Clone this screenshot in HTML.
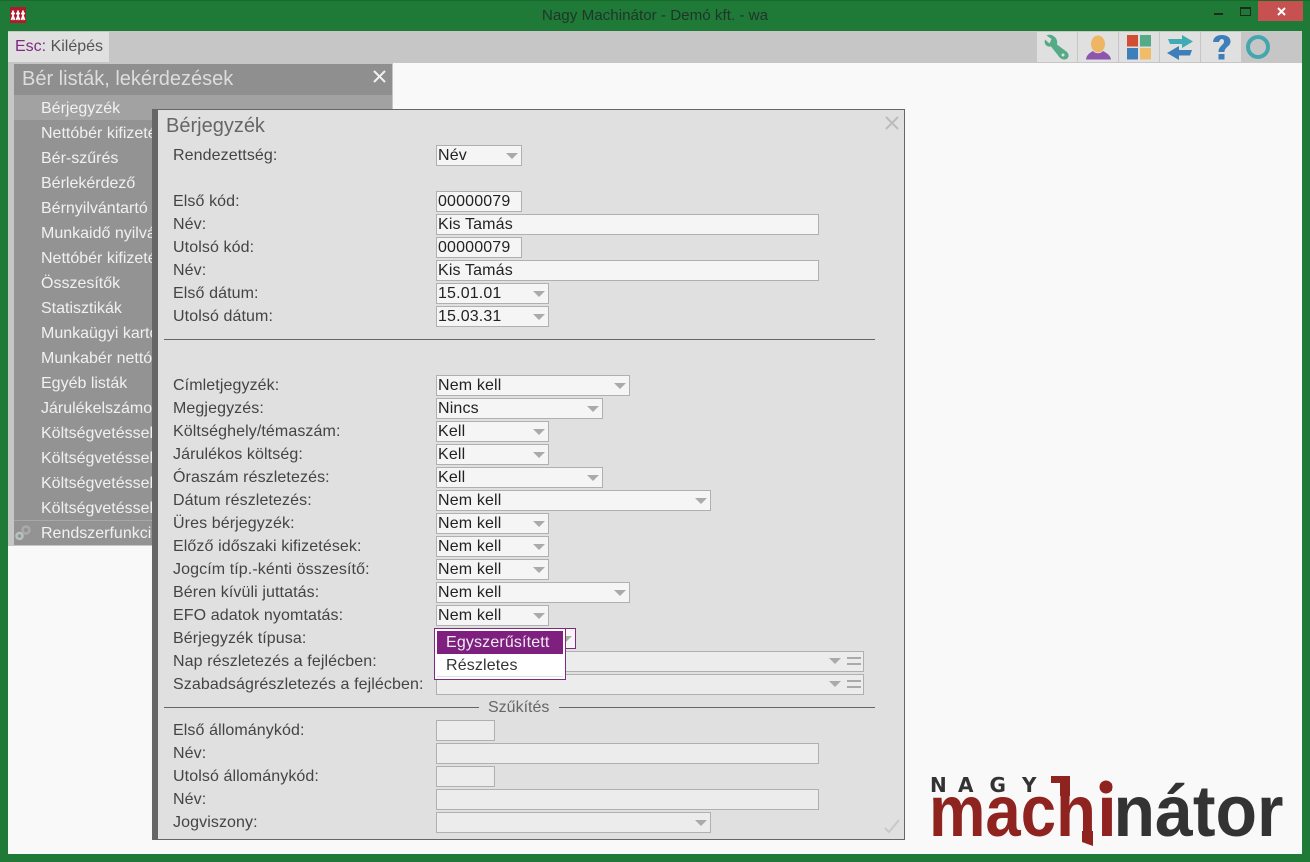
<!DOCTYPE html>
<html lang="hu"><head><meta charset="utf-8"><title>Nagy Machinátor</title>
<style>
html,body{margin:0;padding:0;width:1310px;height:862px;overflow:hidden;background:#1e7a36;font-family:"Liberation Sans",sans-serif;font-size:16px}
div,span{position:absolute;box-sizing:border-box;white-space:nowrap}
.c{left:8px;top:31px;width:1294px;height:823px;background:#f9f9f9}
.it{left:41px;color:#f1f1f1;line-height:27px;height:25px}
.l{left:173px;color:#444;line-height:24px;height:22px;letter-spacing:.1px}
.f{left:436px;height:21px;background:#f5f5f5;border:1px solid #b0b0b0;color:#222;line-height:19px;padding-left:1px;letter-spacing:.15px}
.f.s:after{content:"";position:absolute;right:3px;top:7px;border-style:solid;border-width:6px 6px 0;border-color:#aaa transparent transparent}
.e{background:#ececec}
.q{position:absolute;right:2px;top:5px;width:14px;height:8px;border-top:2px solid #aaa;border-bottom:2px solid #aaa}
.t{top:32px;width:40px;height:30px;background:#e0e0e0}
</style></head><body>
<div style="left:0;top:0;width:1310px;height:1px;background:#166a2b"></div>
<svg style="position:absolute;left:10px;top:7px" width="17" height="17" viewBox="0 0 17 17"><rect width="16" height="16" fill="#b01c2e"/><path d="M3 3.500v8M1 6.500h4M1.500 13L3 9l1.500 4M8 3.500v8M6 6.500h4M6.500 13L8 9l1.500 4M13 3.500v8M11 6.500h4M11.500 13L13 9l1.500 4" stroke="#fff" stroke-width="1.800" fill="none"/></svg>
<div style="left:0;width:1310px;top:7px;text-align:center;color:#20362a;font-size:15.200px;line-height:18px">Nagy Machinátor - Demó kft. - wa</div>
<div style="left:1214px;top:13px;width:9px;height:2px;background:#1c2b20"></div>
<div style="left:1240px;top:7px;width:11px;height:9px;border:1px solid #1c2b20;border-top-width:2px"></div>
<div style="left:1258px;top:1px;width:45px;height:20px;background:#c75050"></div>
<svg style="position:absolute;left:1277px;top:7px" width="9" height="9" viewBox="0 0 9 9"><path d="M1 1l7 7M8 1L1 8" stroke="#fff" stroke-width="2"/></svg>

<div class="c"></div>
<div style="left:8px;top:31px;width:1294px;height:32px;background:#c6c6c6"></div>
<div style="left:8px;top:32px;width:101px;height:30px;background:#e0e0e0;line-height:30px;padding-left:7px;color:#555"><span style="position:static;color:#7f2a80">Esc:</span> Kilépés</div>

<div class="t" style="left:1037px"></div><div class="t" style="left:1078px"></div><div class="t" style="left:1119px"></div><div class="t" style="left:1160px"></div><div class="t" style="left:1201px"></div>
<svg style="position:absolute;left:1037px;top:31px" width="240" height="32" viewBox="0 0 240 32">
<path d="M8 8.500c-1.500 4 1.500 8 6 7l7.500 9.500c1.500 2.500 5 4.500 8 3s2.500-5 .5-7L20 13.500c1-4.500-1.500-8-5.500-9.500-2-.5-4 0-5 .5l5 3.500-2 4.500z" fill="#56ab87"/><circle cx="26" cy="24" r="1.500" fill="#e0e0e0"/>
<ellipse cx="61" cy="13" rx="7" ry="8.500" fill="#eeb565"/><path d="M49 28.500c.5-4 2.500-6 7-8.500 2.500 3 7.500 3 10 0 4.500 2.500 7.500 4.500 8 8.500z" fill="#8d55ab"/>
<rect x="90" y="4" width="11" height="11.500" fill="#d14e32"/><rect x="103" y="4" width="11" height="11.500" fill="#56ab87"/><rect x="90" y="17" width="11" height="11.500" fill="#3d7fb8"/><rect x="103" y="17" width="11" height="11.500" fill="#efbc69"/>
<path d="M131 8h14V4l11 6.500L145 17v-4h-12z" fill="#3fabb5"/><path d="M130 22l12-7v4h13l-2 5.500h-11V29z" fill="#3d7fb8"/>
<path d="M176 11c.5-5 4-7 9-7 5 0 8.500 2.500 8.500 6.500 0 5-6 5.500-6 10.500h-6c0-6 5.500-7 5.500-10.500 0-1.500-1-2.500-2-2.500-1.500 0-2.500 1-3 3z" fill="#3d7fb8"/><rect x="181.500" y="23" width="6" height="5.500" fill="#3d7fb8"/>
<circle cx="221" cy="16" r="10" fill="none" stroke="#46a6ad" stroke-width="4"/></svg>

<!-- sidebar -->
<div style="left:8px;top:63px;width:385px;height:483px;background:#c6c6c6"></div>
<div style="left:14px;top:64px;width:378px;height:481px;background:#939393"></div>
<div style="left:14px;top:64px;width:378px;height:31px;background:#8f8f8f;color:#ddd;font-size:20px;line-height:31px;padding-left:8px">Bér listák, lekérdezések</div>
<svg style="position:absolute;left:373px;top:70px" width="13" height="13" viewBox="0 0 13 13"><path d="M1 1l11 11M12 1L1 12" stroke="#f2f2f2" stroke-width="2"/></svg>
<div style="left:14px;top:95px;width:378px;height:25px;background:#a2a2a2"></div>
<div style="left:14px;top:520px;width:378px;height:1px;background:#a8a8a8"></div>
<div class="it" style="top:95px">Bérjegyzék</div>
<div class="it" style="top:120px">Nettóbér kifizetés</div>
<div class="it" style="top:145px">Bér-szűrés</div>
<div class="it" style="top:170px">Bérlekérdező</div>
<div class="it" style="top:195px">Bérnyilvántartó</div>
<div class="it" style="top:220px">Munkaidő nyilvántartás</div>
<div class="it" style="top:245px">Nettóbér kifizetés</div>
<div class="it" style="top:270px">Összesítők</div>
<div class="it" style="top:295px">Statisztikák</div>
<div class="it" style="top:320px">Munkaügyi kartonok</div>
<div class="it" style="top:345px">Munkabér nettó</div>
<div class="it" style="top:370px">Egyéb listák</div>
<div class="it" style="top:395px">Járulékelszámolás</div>
<div class="it" style="top:420px">Költségvetéssel</div>
<div class="it" style="top:445px">Költségvetéssel</div>
<div class="it" style="top:470px">Költségvetéssel</div>
<div class="it" style="top:495px">Költségvetéssel</div>
<div class="it" style="top:520px">Rendszerfunkciók</div>
<svg style="position:absolute;left:15px;top:524px" width="17" height="17" viewBox="0 0 17 17"><circle cx="11" cy="6" r="3.500" fill="none" stroke="#aaa" stroke-width="2.500"/><circle cx="4.500" cy="12" r="3" fill="none" stroke="#b9c0c0" stroke-width="2.500"/></svg>

<!-- dialog -->
<div style="left:152px;top:109px;width:753px;height:731px;background:#e0e0e0;border:1px solid #666;border-left:6px solid #666"></div>
<div style="left:166px;top:114px;font-size:20px;line-height:24px;color:#666">Bérjegyzék</div>
<svg style="position:absolute;left:885px;top:116px" width="14" height="14" viewBox="0 0 14 14"><path d="M1 1l12 12M13 1L1 13" stroke="#bbb" stroke-width="2"/></svg>

<div class="l" style="top:144px">Rendezettség:</div><div class="f s" style="top:145px;width:86px">Név</div>
<div class="l" style="top:190px">Első kód:</div><div class="f" style="top:191px;width:86px">00000079</div>
<div class="l" style="top:213px">Név:</div><div class="f" style="top:214px;width:383px">Kis Tamás</div>
<div class="l" style="top:236px">Utolsó kód:</div><div class="f" style="top:237px;width:86px">00000079</div>
<div class="l" style="top:259px">Név:</div><div class="f" style="top:260px;width:383px">Kis Tamás</div>
<div class="l" style="top:282px">Első dátum:</div><div class="f s" style="top:283px;width:113px">15.01.01</div>
<div class="l" style="top:305px">Utolsó dátum:</div><div class="f s" style="top:306px;width:113px">15.03.31</div>
<div style="left:164px;top:339px;width:711px;height:1px;background:#666"></div>

<div class="l" style="top:374px">Címletjegyzék:</div><div class="f s" style="top:375px;width:194px">Nem kell</div>
<div class="l" style="top:397px">Megjegyzés:</div><div class="f s" style="top:398px;width:167px">Nincs</div>
<div class="l" style="top:420px">Költséghely/témaszám:</div><div class="f s" style="top:421px;width:113px">Kell</div>
<div class="l" style="top:443px">Járulékos költség:</div><div class="f s" style="top:444px;width:113px">Kell</div>
<div class="l" style="top:466px">Óraszám részletezés:</div><div class="f s" style="top:467px;width:167px">Kell</div>
<div class="l" style="top:489px">Dátum részletezés:</div><div class="f s" style="top:490px;width:275px">Nem kell</div>
<div class="l" style="top:512px">Üres bérjegyzék:</div><div class="f s" style="top:513px;width:113px">Nem kell</div>
<div class="l" style="top:535px">Előző időszaki kifizetések:</div><div class="f s" style="top:536px;width:113px">Nem kell</div>
<div class="l" style="top:558px">Jogcím típ.-kénti összesítő:</div><div class="f s" style="top:559px;width:113px">Nem kell</div>
<div class="l" style="top:581px">Béren kívüli juttatás:</div><div class="f s" style="top:582px;width:194px">Nem kell</div>
<div class="l" style="top:604px">EFO adatok nyomtatás:</div><div class="f s" style="top:605px;width:113px">Nem kell</div>
<div class="l" style="top:627px">Bérjegyzék típusa:</div><div class="f s" style="top:628px;width:140px;border-color:#7f2a80"></div>
<div class="l" style="top:650px">Nap részletezés a fejlécben:</div>
<div class="f e" style="top:651px;width:428px"><span class="q"></span><span style="right:22px;top:6px;border-style:solid;border-width:6px 6px 0;border-color:#aaa transparent transparent"></span></div>
<div class="l" style="top:673px">Szabadságrészletezés a fejlécben:</div>
<div class="f e" style="top:674px;width:428px"><span class="q"></span><span style="right:22px;top:6px;border-style:solid;border-width:6px 6px 0;border-color:#aaa transparent transparent"></span></div>

<div style="left:434px;top:628px;width:132px;height:52px;background:#fff;border:1px solid #7f2a80"></div>
<div style="left:437px;top:631px;width:126px;height:23px;background:#7f2080;color:#eee;line-height:23px;padding-left:9px;letter-spacing:.15px">Egyszerűsített</div>
<div style="left:437px;top:654px;width:126px;height:23px;color:#333;line-height:23px;padding-left:9px;letter-spacing:.15px">Részletes</div>
<div style="left:437px;top:676px;width:126px;height:1px;background:#ddd"></div>

<div style="left:164px;top:707px;width:315px;height:1px;background:#666"></div>
<div style="left:559px;top:707px;width:316px;height:1px;background:#666"></div>
<div style="left:488px;top:697px;color:#666;line-height:22px">Szűkítés</div>

<div class="l" style="top:719px">Első állománykód:</div><div class="f e" style="top:720px;width:59px"></div>
<div class="l" style="top:742px">Név:</div><div class="f e" style="top:743px;width:383px"></div>
<div class="l" style="top:765px">Utolsó állománykód:</div><div class="f e" style="top:766px;width:59px"></div>
<div class="l" style="top:788px">Név:</div><div class="f e" style="top:789px;width:383px"></div>
<div class="l" style="top:811px">Jogviszony:</div><div class="f e s" style="top:812px;width:275px"></div>
<svg style="position:absolute;left:884px;top:819px" width="16" height="15" viewBox="0 0 16 15"><path d="M1 9l4 4L15 1" fill="none" stroke="#c8c8c8" stroke-width="2"/></svg>

<!-- logo -->
<svg style="position:absolute;left:920px;top:765px" width="380" height="90" viewBox="0 0 380 90" font-family="Liberation Sans, sans-serif" font-weight="bold">
<text x="10 38 69.500 102" y="27" font-size="20" fill="#333" font-family="DejaVu Sans, sans-serif">NAGY</text>
<text x="9" y="71" font-size="72" fill="#8f231f" textLength="127" lengthAdjust="spacingAndGlyphs">mac</text>
<text x="136" y="71" font-size="72" fill="#8f231f" textLength="40" lengthAdjust="spacingAndGlyphs">h</text>
<rect x="131" y="11" width="19" height="7" fill="#8f231f"/><rect x="140" y="11" width="10" height="20" fill="#8f231f"/>
<path d="M162 66h11v15l-11-4z" fill="#8f231f"/>
<text x="177" y="71" font-size="72" fill="#8f231f">i</text>
<circle cx="186" cy="22" r="6.500" fill="#8f231f"/>
<text x="193.500" y="71" font-size="72" fill="#333" textLength="170" lengthAdjust="spacingAndGlyphs">nátor</text>
</svg>
</body></html>
